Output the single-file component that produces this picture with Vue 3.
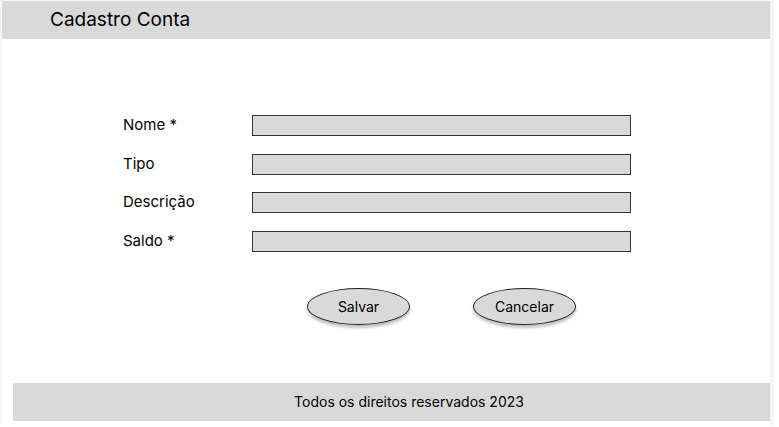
<script setup>
import { reactive } from 'vue'

const fields = [
  { id: 'nome', label: 'Nome *', required: true },
  { id: 'tipo', label: 'Tipo', required: false },
  { id: 'descricao', label: 'Descrição', required: false },
  { id: 'saldo', label: 'Saldo *', required: true },
]

const conta = reactive({ nome: '', tipo: '', descricao: '', saldo: '' })

function limpar() {
  fields.forEach((f) => {
    conta[f.id] = ''
  })
}
</script>

<template>
  <div class="canvas">
    <div class="page">
      <header class="header">
        <h1>Cadastro Conta</h1>
      </header>
      <main class="main">
        <form class="form" @submit.prevent>
          <div class="fields">
            <div v-for="f in fields" :key="f.id" class="row">
              <label :for="f.id">{{ f.label }}</label>
              <input :id="f.id" v-model="conta[f.id]" type="text" :required="f.required" />
            </div>
          </div>
          <div class="actions">
            <button type="submit">Salvar</button>
            <button type="button" @click="limpar">Cancelar</button>
          </div>
        </form>
      </main>
      <footer class="footer">Todos os direitos reservados 2023</footer>
    </div>
  </div>
</template>

<style>
body {
  background: #fff;
}
</style>

<style scoped>
.canvas {
  box-sizing: border-box;
  display: flex;
  min-height: calc(100vh - 2px);
  margin-right: 5px;
  padding: 1px 4px 0 2px;
  background: #f5f5f5;
  color: #000;
  font-family: Inter, sans-serif;
}

.page {
  box-sizing: border-box;
  flex: 1;
  display: flex;
  flex-direction: column;
  padding-bottom: 4px;
  background: #fff;
}

.header {
  padding: 0 48px;
  background: #d9d9d9;
}

h1 {
  margin: 0;
  font-size: 19px;
  font-weight: 400;
  line-height: 38px;
}

.main {
  flex: 1;
  padding: 76px 139px 40px 121px;
}

.fields {
  display: flex;
  flex-direction: column;
  justify-content: space-between;
  height: 137px;
}

.row {
  display: grid;
  grid-template-columns: 129px 1fr;
  align-items: start;
  height: 21px;
}

label {
  font-size: 15px;
  line-height: 19px;
}

input {
  box-sizing: border-box;
  width: 100%;
  height: 21px;
  margin: 0;
  padding: 0 6px;
  border: 1px solid #333;
  border-radius: 0;
  background: #d9d9d9;
  font: inherit;
  font-size: 14px;
}

.actions {
  display: flex;
  justify-content: center;
  gap: 63px;
  margin-top: 36px;
  padding-left: 129px;
}

button {
  width: 103px;
  height: 37px;
  padding: 0;
  border: 1px solid #222;
  border-radius: 50%;
  background: #d9d9d9;
  box-shadow: 0 3px 3px rgba(0, 0, 0, 0.25);
  color: #000;
  font: inherit;
  font-size: 14px;
}

.footer {
  margin-left: 11px;
  padding-left: 35px;
  background: #d9d9d9;
  font-size: 14px;
  line-height: 38px;
  text-align: center;
}
</style>
